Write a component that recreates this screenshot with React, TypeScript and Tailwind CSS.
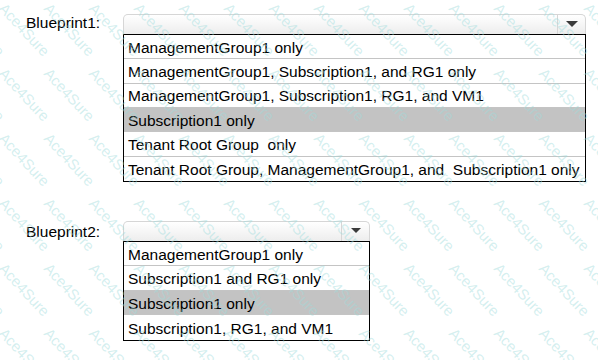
import React from 'react';

interface DropdownProps {
  label: string;
  width: string;
  rowHeight: string;
  labelPad: string;
  arrow: number;
  options: string[];
  selected: number;
}

const Arrow: React.FC<{ size: number }> = ({ size }) => (
  <svg width={size} height={size / 2} viewBox="0 0 12 6">
    <path d="M0 0 H12 L6 6 Z" fill="#3a3a3a" />
  </svg>
);

const Dropdown: React.FC<DropdownProps> = ({ label, width, rowHeight, labelPad, arrow, options, selected }) => (
  <div className="flex">
    <div className={`w-[123px] pl-[26px] leading-[18px] ${labelPad}`}>{label}</div>
    <div className={width}>
      {/* closed combobox */}
      <div className="h-[20px] rounded-t-[5px] border border-b-0 border-[#d6d6d6] bg-linear-to-b from-white to-[#ededed] flex justify-end">
        <div className="w-[28px] border-l border-[#d6d6d6] flex items-center justify-center pb-[1px]">
          <Arrow size={arrow} />
        </div>
      </div>
      {/* open list */}
      <div className="border border-black bg-white">
        {options.map((opt, i) => (
          <div
            key={i}
            className={`${rowHeight} flex items-center pl-[4px] pt-[1px] whitespace-pre ${
              i < options.length - 1 ? 'border-b border-[#c4c4c4]' : ''
            } ${i === selected ? 'bg-[#c3c3c3]' : ''}`}
          >
            {opt}
          </div>
        ))}
      </div>
    </div>
  </div>
);

// faint diagonal "Ace4Sure" stamp over the whole shot
const Watermark: React.FC = () => {
  const marks: { x: number; y: number }[] = [];
  for (let i = -3; i < 14; i++) {
    for (let j = -1; j < 6; j++) {
      marks.push({ x: 2 + i * 45, y: -2 + j * 65 });
    }
  }
  return (
    <div aria-hidden className="pointer-events-none absolute inset-0 overflow-hidden">
      {marks.map((m, k) => (
        <span
          key={k}
          className="absolute origin-left rotate-[47deg] text-[15px] leading-none text-[#9fdcdc]/45 whitespace-nowrap"
          style={{ left: m.x, top: m.y }}
        >
          Ace4Sure
        </span>
      ))}
    </div>
  );
};

export default function App() {
  return (
    <div className="relative w-[598px] h-[360px] overflow-hidden bg-white text-black text-[15.5px] font-['Liberation_Sans',Arial,sans-serif]">
      <div className="pt-[14px]">
        <Dropdown
          label="Blueprint1:"
          width="w-[463px]"
          rowHeight="h-[24.33px]"
          labelPad="pt-0"
          arrow={12}
          selected={3}
          options={[
            'ManagementGroup1 only',
            'ManagementGroup1, Subscription1, and RG1 only',
            'ManagementGroup1, Subscription1, RG1, and VM1',
            'Subscription1 only',
            'Tenant Root Group  only',
            'Tenant Root Group, ManagementGroup1, and  Subscription1 only',
          ]}
        />
      </div>
      <div className="mt-[39px]">
        <Dropdown
          label="Blueprint2:"
          width="w-[247px]"
          rowHeight="h-[24.5px]"
          labelPad="pt-[2px]"
          arrow={10}
          selected={2}
          options={[
            'ManagementGroup1 only',
            'Subscription1 and RG1 only',
            'Subscription1 only',
            'Subscription1, RG1, and VM1',
          ]}
        />
      </div>
      <Watermark />
    </div>
  );
}
